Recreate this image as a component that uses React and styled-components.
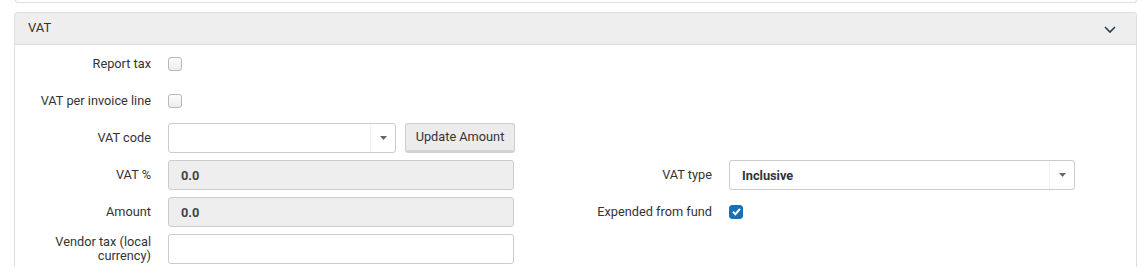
import styled, { createGlobalStyle } from 'styled-components'

const GlobalStyle = createGlobalStyle`
  html, body {
    margin: 0;
    padding: 0;
    background: #fff;
    font-family: Roboto, "Liberation Sans", Arial, sans-serif;
    font-size: 13px;
    color: #333;
  }
`

function App() {
  return (
    <Page>
      <GlobalStyle />
      <PrevPanel />
      <Panel>
        <PanelHeader>
          <PanelTitle>VAT</PanelTitle>
          <Chevron width="14" height="10" viewBox="0 0 14 10">
            <polyline points="2,3 7,8 12,3" fill="none" stroke="#2e3d4f" strokeWidth="1.6" />
          </Chevron>
        </PanelHeader>
        <PanelBody>
          <Row>
            <Field>
              <Label>Report tax</Label>
              <Control><Checkbox /></Control>
            </Field>
          </Row>
          <Row>
            <Field>
              <Label>VAT per invoice line</Label>
              <Control><Checkbox /></Control>
            </Field>
          </Row>
          <Row>
            <Field>
              <Label>VAT code</Label>
              <Control>
                <Select $width="228px">
                  <SelectValue />
                  <Caret><CaretIcon /></Caret>
                </Select>
                <Button>Update Amount</Button>
              </Control>
            </Field>
          </Row>
          <Row>
            <Field>
              <Label>VAT %</Label>
              <Control><ReadOnly>0.0</ReadOnly></Control>
            </Field>
            <Field>
              <Label>VAT type</Label>
              <Control>
                <Select $width="100%">
                  <SelectValue>Inclusive</SelectValue>
                  <Caret><CaretIcon /></Caret>
                </Select>
              </Control>
            </Field>
          </Row>
          <Row>
            <Field>
              <Label>Amount</Label>
              <Control><ReadOnly>0.0</ReadOnly></Control>
            </Field>
            <Field>
              <Label>Expended from fund</Label>
              <Control><Checkbox $checked>
                <svg width="11" height="11" viewBox="0 0 11 11">
                  <polyline points="2,5.8 4.4,8.2 9,2.8" fill="none" stroke="#fff" strokeWidth="2" />
                </svg>
              </Checkbox></Control>
            </Field>
          </Row>
          <Row>
            <Field>
              <Label $wrap>Vendor tax (local currency)</Label>
              <Control><TextInput /></Control>
            </Field>
          </Row>
        </PanelBody>
      </Panel>
    </Page>
  )
}

function CaretIcon() {
  return (
    <svg width="7" height="4" viewBox="0 0 7 4">
      <polygon points="0,0 7,0 3.5,4" fill="#666" />
    </svg>
  )
}

export default App

const Page = styled.div`
  padding: 0 5px 0 14px;
  height: 267px;
  overflow: hidden;
`

const PrevPanel = styled.div`
  height: 2px;
  margin-left: 1px;
  border: 1px solid #ddd;
  border-top: none;
  border-radius: 0 0 4px 4px;
`

const Panel = styled.section`
  margin-top: 9px;
  border: 1px solid #ddd;
  border-radius: 4px 4px 0 0;
  border-bottom: none;
`

const PanelHeader = styled.div`
  height: 31px;
  display: flex;
  align-items: center;
  justify-content: space-between;
  padding: 0 19px 0 13px;
  background: #eeeeee;
  border-bottom: 1px solid #ddd;
  border-radius: 3px 3px 0 0;
`

const PanelTitle = styled.span`
  font-size: 13px;
  color: #333;
  margin-top: -2px;
`

const Chevron = styled.svg`
  display: block;
  margin-top: 1px;
`

const PanelBody = styled.div`
  padding: 4px 0 20px;
  display: flex;
  flex-direction: column;
  gap: 7px;
`

const Row = styled.div`
  display: grid;
  grid-template-columns: 561px 561px;
  height: 30px;
`

const Field = styled.div`
  display: grid;
  grid-template-columns: 136px 346px;
  column-gap: 17px;
  align-items: center;
`

const Label = styled.label`
  text-align: right;
  font-size: 12.75px;
  color: #333;
  line-height: ${p => (p.$wrap ? '14px' : '16px')};
  padding-left: ${p => (p.$wrap ? '40px' : '0')};
  margin-top: ${p => (p.$wrap ? '-1px' : '0')};
`

const Control = styled.div`
  display: flex;
  align-items: center;
  gap: 9px;
  height: 30px;
`

const Checkbox = styled.span`
  box-sizing: border-box;
  width: 14px;
  height: 14px;
  border-radius: 3px;
  border: 1px solid ${p => (p.$checked ? '#1b6fb2' : '#b8b8b8')};
  background: ${p => (p.$checked ? '#1a70b6' : 'linear-gradient(#fdfdfd, #ececec)')};
  display: flex;
  align-items: center;
  justify-content: center;
  margin-bottom: 1px;
`

const Select = styled.div`
  box-sizing: border-box;
  flex: none;
  width: ${p => p.$width};
  height: 30px;
  border: 1px solid #ccc;
  border-radius: 3px;
  background: #fff;
  display: flex;
  align-items: stretch;
`

const SelectValue = styled.div`
  flex: 1;
  display: flex;
  align-items: center;
  padding-left: 12px;
  font-weight: 700;
  font-size: 12.75px;
  color: #333;
`

const Caret = styled.div`
  width: 24px;
  border-left: 1px solid #f0f0f0;
  display: flex;
  align-items: center;
  justify-content: center;
`

const Button = styled.button`
  box-sizing: border-box;
  flex: none;
  height: 30px;
  width: 110px;
  padding: 0;
  font-family: inherit;
  font-size: 12.75px;
  color: #333;
  background: #ececec;
  border: 1px solid #ccc;
  border-bottom: 3px solid #d2d2d2;
  border-radius: 3px;
  line-height: 26px;
`

const ReadOnly = styled.div`
  box-sizing: border-box;
  width: 100%;
  height: 30px;
  border: 1px solid #ccc;
  border-radius: 3px;
  background: #eeeeee;
  display: flex;
  align-items: center;
  padding-left: 12px;
  font-weight: 700;
  font-size: 12.75px;
  color: #444;
`

const TextInput = styled.div`
  box-sizing: border-box;
  width: 100%;
  height: 30px;
  border: 1px solid #ccc;
  border-radius: 3px;
  background: #fff;
`
